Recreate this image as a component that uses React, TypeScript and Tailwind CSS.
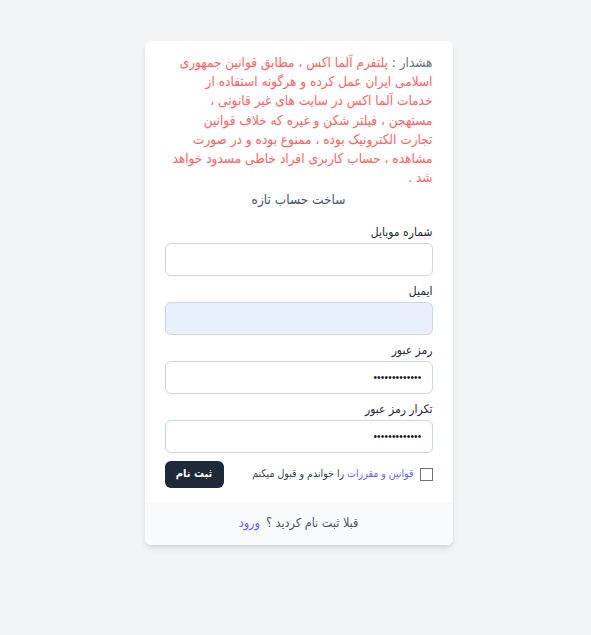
import React, { useState } from 'react';

const Field: React.FC<{ label: string; type?: string; value?: string; filled?: boolean }> = ({ label, type = 'text', value = '', filled }) => {
  const [v, setV] = useState(value);
  return (
    <div className="flex flex-col">
      <label className="text-[12px] leading-[16px] text-gray-800 mb-[3px]">{label}</label>
      <input
        type={type}
        value={v}
        onChange={(e) => setV(e.target.value)}
        className={`h-[33px] w-full rounded-md border border-gray-300 px-[10px] text-[10px] tracking-[0.2px] text-gray-900 outline-none ${filled ? 'bg-[#e8f0fe]' : 'bg-white'}`}
        style={type === 'password' ? { fontFamily: '"Liberation Sans", sans-serif' } : undefined}
      />
    </div>
  );
};

const warning = [
  'پلتفرم آلما اکس ، مطابق قوانین جمهوری',
  'اسلامی ایران عمل کرده و هرگونه استفاده از',
  'خدمات آلما اکس در سایت های غیر قانونی ،',
  'مستهجن ، فیلتر شکن و غیره که خلاف قوانین',
  'تجارت الکترونیک بوده ، ممنوع بوده و در صورت',
  'مشاهده ، حساب کاربری افراد خاطی مسدود خواهد',
  'شد .',
];

export default function App() {
  const [agree, setAgree] = useState(false);

  return (
    <div dir="rtl" className="min-h-screen bg-gray-100 flex justify-center pt-[41px] pl-[6px]" style={{ fontFamily: '"DejaVu Sans Condensed", "DejaVu Sans", sans-serif' }}>
      <div className="w-[308px] h-fit bg-white rounded-md shadow-md overflow-hidden">
        <div className="px-5 pt-[12px] pb-[14px]">
          <p className="text-[13.5px] leading-[19.2px] text-red-400 whitespace-nowrap">
            <span className="text-gray-500">هشدار : </span>
            {warning.map((line, i) => (
              <React.Fragment key={i}>
                {line}
                {i < warning.length - 1 && <br />}
              </React.Fragment>
            ))}
          </p>
          <h2 className="text-center text-[13.5px] text-gray-600 mt-[2px] mb-[14px]">ساخت حساب تازه</h2>

          <div className="flex flex-col gap-[7px]">
            <Field label="شماره موبایل" />
            <Field label="ایمیل" filled />
            <Field label="رمز عبور" type="password" value="1234567890123" />
            <Field label="تکرار رمز عبور" type="password" value="1234567890123" />
          </div>

          <div className="flex items-center justify-between mt-[8px]">
            <label className="flex items-center gap-[6px] text-[10.5px] text-gray-700">
              <input
                type="checkbox"
                checked={agree}
                onChange={(e) => setAgree(e.target.checked)}
                className="appearance-none w-[13px] h-[13px] border border-gray-500 bg-white"
              />
              <span>
                <a href="#" className="text-indigo-500">قوانین و مقررات</a> را خواندم و قبول میکنم
              </span>
            </label>
            <button className="w-[59px] h-[27px] bg-gray-800 text-white text-[11px] font-bold rounded-md">ثبت نام</button>
          </div>
        </div>
        <div className="bg-gray-50 h-[43px] flex items-center justify-center text-[12.5px] text-gray-600">
          <span>قبلا ثبت نام کردید ؟ </span>
          <a href="#" className="text-indigo-500 mr-[6px]">ورود</a>
        </div>
      </div>
    </div>
  );
}
